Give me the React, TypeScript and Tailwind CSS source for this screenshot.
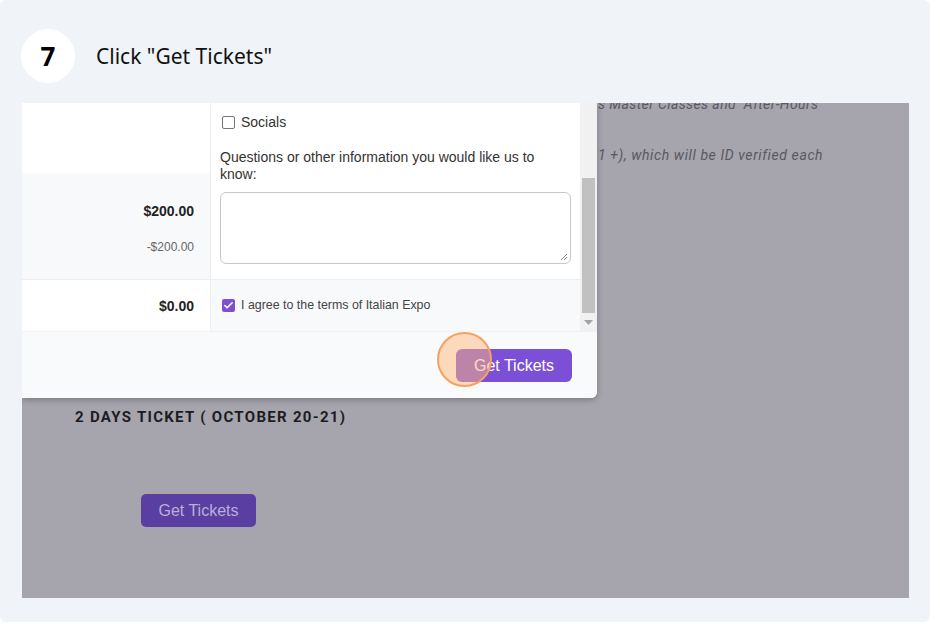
import { Check } from 'lucide-react';

const arial = { fontFamily: '"Liberation Sans", Arial, sans-serif' };

function Checkbox({ checked }: { checked?: boolean }) {
  if (checked) {
    return (
      <span className="flex h-[13px] w-[13px] items-center justify-center rounded-[2px] bg-[#7b4fd6]">
        <Check className="h-[11px] w-[11px] text-white" strokeWidth={3.5} />
      </span>
    );
  }
  return <span className="block h-[13px] w-[13px] rounded-[2px] border border-[#767676] bg-white" />;
}

function Modal() {
  return (
    <div
      className="absolute left-0 top-0 flex h-[295px] w-[575px] flex-col overflow-hidden rounded-br-[6px] bg-white text-[#333] shadow-[0_2px_6px_rgba(0,0,0,0.25)]"
      style={arial}
    >
      {/* body */}
      <div className="flex h-[228px]">
        {/* summary column */}
        <div className="flex w-[188px] flex-col text-right">
          <div className="h-[70px] bg-white" />
          <div className="flex h-[106px] flex-col items-end bg-[#f8f9fb] pr-4 pt-[30px]">
            <span className="text-[14px] font-bold leading-4 text-[#222]">$200.00</span>
            <span className="mt-[20px] text-[12px] leading-4 text-[#666]">-$200.00</span>
          </div>
          <div className="flex h-[52px] items-start justify-end border-t border-[#eceef2] bg-white pr-4 pt-[18px]">
            <span className="text-[14px] font-bold leading-4 text-[#222]">$0.00</span>
          </div>
        </div>

        {/* form column */}
        <div className="flex w-[370px] flex-col border-l border-[#eceef2]">
          <div className="h-[176px] px-[9px] pt-[12px]">
            <label className="flex items-center gap-[6px] pl-[2px] text-[14px] leading-[14px]">
              <Checkbox />
              <span>Socials</span>
            </label>
            <p className="mt-[20px] text-[14px] leading-[17px]">
              Questions or other information you would like us to know:
            </p>
            <div className="relative mt-[9px] h-[72px] w-[351px] rounded-[6px] border border-[#c8c8cc] bg-white">
              <svg className="absolute bottom-[2px] right-[2px]" width="9" height="9" viewBox="0 0 9 9">
                <path d="M8 2 L2 8 M8 5 L5 8" stroke="#888" strokeWidth="1" />
              </svg>
            </div>
          </div>
          <div className="flex flex-1 items-start border-t border-[#eceef2] bg-[#f8f9fb] px-[11px] pt-[18px]">
            <label className="flex items-center gap-[6px] text-[12.4px] leading-[14px] text-[#444]">
              <Checkbox checked />
              <span>I agree to the terms of Italian Expo</span>
            </label>
          </div>
        </div>

        {/* scrollbar */}
        <div className="relative w-[17px] bg-[#f1f1f1]">
          <div className="absolute left-[2px] right-[2px] top-[75px] h-[135px] bg-[#c1c1c1]" />
          <svg className="absolute bottom-[6px] left-[4px]" width="9" height="5" viewBox="0 0 9 5">
            <path d="M0 0 H9 L4.5 5 Z" fill="#a3a3a3" />
          </svg>
        </div>
      </div>

      {/* footer */}
      <div className="relative flex flex-1 items-start justify-end border-t border-[#f0f1f4] bg-[#f9fafc] pr-[25px] pt-[17px]">
        <button className="h-[33px] w-[116px] rounded-[6px] bg-[#7b4fd6] text-[16px] text-white">Get Tickets</button>
      </div>
    </div>
  );
}

export default function App() {
  return (
    <div className="h-[624px] w-[940px] bg-white">
      <div className="flex h-[622px] w-[930px] flex-col rounded-[6px] bg-[#f0f3f8]">
        {/* step header */}
        <div className="flex h-[103px] items-start pl-[21px] pt-[29px]">
          <div
            className="flex h-[54px] w-[54px] items-center justify-center rounded-full bg-white text-[26px] font-bold text-black"
            style={{ fontFamily: '"Noto Sans", sans-serif' }}
          >
            7
          </div>
          <span
            className="ml-[21px] mt-[13px] text-[21px] leading-7 text-[#111]"
            style={{ fontFamily: '"Noto Sans", sans-serif' }}
          >
            Click "Get Tickets"
          </span>
        </div>

        {/* screenshot */}
        <div className="relative ml-[22px] h-[495px] w-[887px] overflow-hidden bg-[#a6a4ad]">
          <div className="flex flex-col" style={{ fontFamily: 'Roboto, sans-serif' }}>
            <p className="-mt-[9px] ml-[576px] whitespace-nowrap text-[14px] italic leading-5 tracking-[0.4px] text-[#5a5860]">
              s Master Classes and "After-Hours"
            </p>
            <p className="ml-[576px] mt-[31px] whitespace-nowrap text-[14px] italic leading-5 tracking-[0.6px] text-[#5a5860]">
              1 +), which will be ID verified each
            </p>
            <h2 className="ml-[53px] mt-[242px] whitespace-nowrap text-[15px] font-bold leading-5 tracking-[1.3px] text-[#1d1c22]">
              2 DAYS TICKET ( OCTOBER 20-21)
            </h2>
            <button
              className="ml-[119px] mt-[67px] h-[33px] w-[115px] rounded-[5px] bg-[#5b3ea1] text-[16px] text-[#b8b0d6]"
              style={arial}
            >
              Get Tickets
            </button>
          </div>

          <Modal />

          {/* click highlight */}
          <div className="absolute left-[415px] top-[229px] h-[55px] w-[55px] rounded-full border-2 border-[#f4a261] bg-[#ffb77a]/50" />
        </div>
      </div>
    </div>
  );
}
